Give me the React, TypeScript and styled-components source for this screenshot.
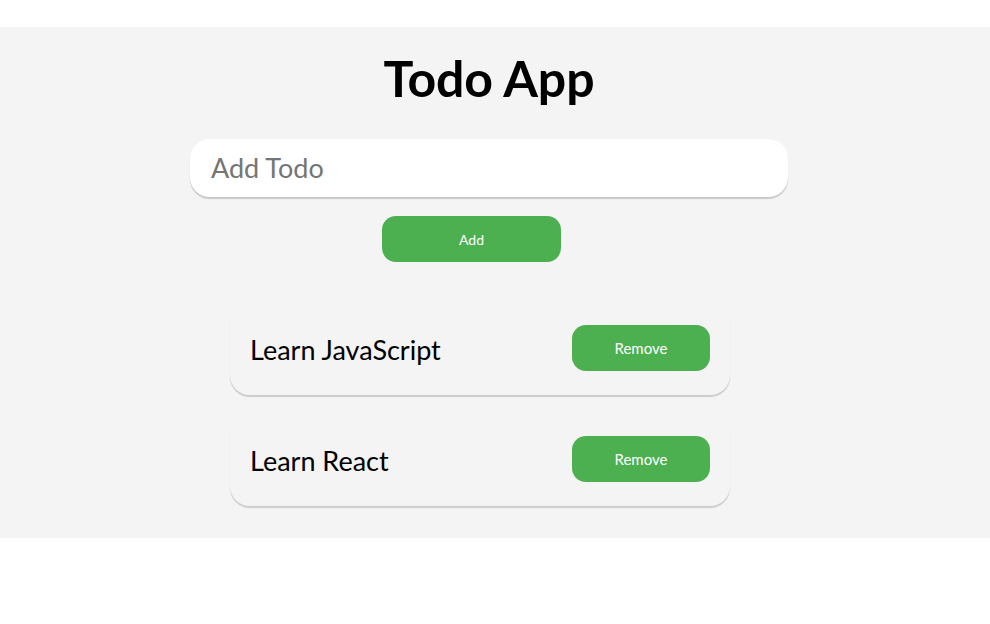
import React, { useState } from "react";
import styled, { createGlobalStyle } from "styled-components";

const GlobalStyle = createGlobalStyle`
  html, body {
    margin: 0;
    padding: 0;
    background: #ffffff;
    font-family: Lato, "Open Sans", sans-serif;
  }
`;

const Page = styled.div`
  padding-top: 27px;
`;

const Board = styled.main`
  background: #f4f4f4;
  padding: 21px 0 32px;
  display: flex;
  justify-content: center;
`;

const Column = styled.div`
  width: 598px;
  margin-right: 12px;
  display: flex;
  flex-direction: column;
  align-items: center;
`;

const Title = styled.h1`
  margin: 0 0 31px;
  font-family: Lato, sans-serif;
  font-weight: 700;
  font-size: 50px;
  line-height: 60px;
  color: #000;
  letter-spacing: -0.1px;
`;

const Form = styled.form`
  width: 100%;
  display: flex;
  flex-direction: column;
  align-items: center;
`;

const TodoInput = styled.input`
  box-sizing: border-box;
  width: 100%;
  height: 58px;
  padding: 0 20px 2px 21px;
  border: none;
  outline: none;
  border-radius: 20px;
  background: #fff;
  box-shadow: 0 2px 1px rgba(0, 0, 0, 0.18);
  font-family: Lato, sans-serif;
  font-size: 27px;
  color: #222;
  &::placeholder {
    color: #757575;
  }
`;

const GreenButton = styled.button<{ $w: number; $shift?: number }>`
  box-sizing: border-box;
  width: ${(p) => p.$w}px;
  height: 46px;
  border: none;
  border-radius: 14px;
  background: #4caf50;
  color: #fff;
  font-family: Lato, sans-serif;
  font-size: 14px;
  cursor: pointer;
  flex-shrink: 0;
  margin-right: ${(p) => p.$shift ?? 0}px;
`;

const AddButton = styled(GreenButton)`
  margin-top: 19px;
`;

const List = styled.ul`
  list-style: none;
  margin: 43px 18px 0 0;
  padding: 0;
  width: 500px;
  display: flex;
  flex-direction: column;
  gap: 21px;
`;

const Item = styled.li`
  box-sizing: border-box;
  height: 90px;
  padding: 20px 20px 24px;
  border-radius: 20px;
  background: #f4f4f4;
  box-shadow: 0 2px 1px rgba(0, 0, 0, 0.16);
  display: flex;
  align-items: center;
  justify-content: space-between;
`;

const ItemText = styled.span`
  font-family: Lato, sans-serif;
  font-size: 27px;
  color: #000;
  padding-top: 3px;
`;

const RemoveButton = styled(GreenButton)`
  font-size: 15px;
`;

export default function App() {
  const [text, setText] = useState("");
  const [todos, setTodos] = useState(["Learn JavaScript", "Learn React"]);

  return (
    <Page>
      <GlobalStyle />
      <Board>
        <Column>
          <Title>Todo App</Title>
          <Form
            onSubmit={(e) => {
              e.preventDefault();
              if (text.trim()) {
                setTodos([...todos, text.trim()]);
                setText("");
              }
            }}
          >
            <TodoInput
              placeholder="Add Todo"
              value={text}
              onChange={(e) => setText(e.target.value)}
            />
            <AddButton type="submit" $w={179} $shift={35}>
              Add
            </AddButton>
          </Form>
          <List>
            {todos.map((t, i) => (
              <Item key={t + i}>
                <ItemText>{t}</ItemText>
                <RemoveButton
                  type="button"
                  $w={138}
                  onClick={() => setTodos(todos.filter((_, j) => j !== i))}
                >
                  Remove
                </RemoveButton>
              </Item>
            ))}
          </List>
        </Column>
      </Board>
    </Page>
  );
}
